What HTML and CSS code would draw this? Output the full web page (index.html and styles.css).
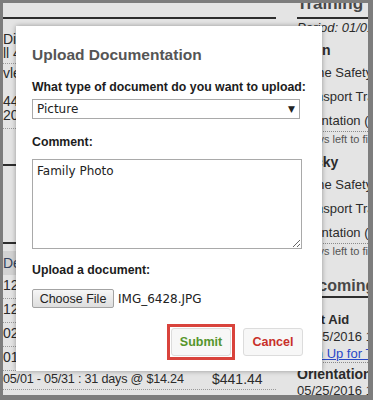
FILE: index.html
```html
<!DOCTYPE html>
<html lang="en">
<head>
    <meta charset="UTF-8">
    <meta name="viewport" content="width=device-width, initial-scale=1.0">
    <title>Upload Documentation</title>
    <link rel="stylesheet" href="styles.css">
</head>
<body>
<div class="screen">
    <div class="page">
        <!-- Main column (behind the dialog) -->
        <div class="main">
            <div class="main-head"></div>
            <div class="info-block">
                <div class="info-line">Direct Deposit</div>
                <div class="info-line">ll 4 accounts</div>
                <div class="info-line spaced">vle Road</div>
                <div class="info-line gap">4410 Main</div>
                <div class="info-line">2016</div>
            </div>
            <div class="section-head"></div>
            <div class="section-head tall"></div>
            <div class="table">
                <div class="table-head">Description</div>
                <div class="table-row"><span>12/01 - 12/31</span></div>
                <div class="table-row"><span>12/01 - 12/31</span></div>
                <div class="table-row"><span>02/01 - 02/29</span></div>
                <div class="table-row"><span>01/01 - 01/31</span></div>
                <div class="table-row last">
                    <span class="desc">05/01 - 05/31 : 31 days @ $14.24</span>
                    <span class="amount">$441.44</span>
                </div>
            </div>
        </div>

        <!-- Sidebar -->
        <aside class="side">
            <h2 class="side-title">Training</h2>
            <div class="period">Period: 01/01/2016 - 12/31/2016</div>
            <div class="person">John</div>
            <div class="course">Home Safety</div>
            <div class="course">Transport Training</div>
            <div class="course">Orientation (2)</div>
            <div class="days-left">2 days left to finish</div>
            <div class="person second">Becky</div>
            <div class="course">Home Safety</div>
            <div class="course">Transport Training</div>
            <div class="course">Orientation (2)</div>
            <div class="days-left">2 days left to finish</div>

            <h2 class="side-title upcoming">Upcoming</h2>
            <div class="event-name">First Aid</div>
            <div class="event-date">05/25/2016 12:00 PM</div>
            <a class="event-link" href="#">Sign Up for Training</a>
            <div class="event-name next">Orientation</div>
            <div class="event-date">05/25/2016 12:00 PM</div>
        </aside>
    </div>

    <!-- Upload dialog -->
    <div class="modal">
        <h1>Upload Documentation</h1>

        <label class="field-label">What type of document do you want to upload:</label>
        <div class="select-box">
            <span>Picture</span>
            <span class="select-arrow">&#9660;</span>
        </div>

        <label class="field-label comment-label" for="comment">Comment:</label>
        <textarea id="comment" class="comment">Family Photo</textarea>

        <label class="field-label upload-label">Upload a document:</label>
        <div class="file-row">
            <button class="file-button" type="button">Choose File</button>
            <span class="file-name">IMG_6428.JPG</span>
        </div>

        <div class="actions">
            <span class="highlight">
                <button class="action submit" type="button">Submit</button>
            </span>
            <button class="action cancel" type="button">Cancel</button>
        </div>
    </div>
</div>
</body>
</html>
```

FILE: styles.css
```css
* {
    box-sizing: border-box;
}

body {
    margin: 0;
    font-family: 'Liberation Sans', Arial, sans-serif;
    background: #7d7d7d;
}

.screen {
    position: relative;
    width: 373px;
    height: 400px;
    overflow: hidden;
    border-style: solid;
    border-color: #7d7d7d;
    border-width: 3px 5px 5px 3px;
    background: #e4e4e4;
    color: #2b2b2b;
}

.page {
    display: grid;
    grid-template-columns: 273px 71px;
    column-gap: 21px;
}

/* ---------- main column ---------- */

.main-head {
    height: 16px;
    border-bottom: 2px solid #2e2e2e;
}

.info-block {
    padding: 13px 0 6px;
    border-bottom: 1px dotted #9a9a9a;
    font-size: 14px;
}

.info-line {
    line-height: 14px;
    white-space: nowrap;
}

.info-line.spaced {
    margin-top: 3px;
    padding-top: 2px;
    border-top: 1px dotted #9a9a9a;
}

.info-line.gap {
    margin-top: 14px;
}

.section-head {
    height: 37px;
    border-bottom: 2px solid #2e2e2e;
}

.section-head.tall {
    height: 78px;
}

.table {
    margin-top: 7px;
    font-size: 14px;
}

.table-head {
    height: 24px;
    line-height: 24px;
    background: #d2d2d2;
    color: #34425e;
}

.table-row {
    display: flex;
    height: 24px;
    line-height: 20px;
    border-bottom: 1px dotted #9a9a9a;
    white-space: nowrap;
}

.table-row.last {
    height: 19px;
    line-height: 17px;
}

.desc {
    width: 209px;
    font-size: 12.6px;
    letter-spacing: -0.2px;
}

.amount {
    width: 50px;
    text-align: right;
}

/* ---------- sidebar ---------- */

.side {
    font-size: 13px;
    white-space: nowrap;
}

.side-title {
    margin: 0;
    height: 16px;
    line-height: 2px;
    font-size: 17px;
    color: #474747;
    border-bottom: 2px solid #2e2e2e;
}

.period {
    line-height: 18px;
    font-style: italic;
}

.person {
    margin-top: 4px;
    line-height: 18px;
    font-size: 14px;
    font-weight: bold;
}

.person.second {
    margin-top: 7px;
}

.course {
    margin-top: 4px;
    line-height: 20px;
}

.days-left {
    border-top: 1px dotted #8a8a8a;
    line-height: 14px;
    font-size: 11px;
    color: #555;
}

.side-title.upcoming {
    margin-top: 18px;
    height: 22px;
    line-height: 20px;
    font-size: 16px;
}

.event-name {
    margin-top: 13px;
    line-height: 18px;
    font-weight: bold;
}

.event-name.next {
    margin-top: 0;
    padding-top: 2px;
    border-top: 1px dotted #8a8a8a;
    font-size: 14px;
}

.event-date {
    line-height: 16px;
}

.event-link {
    display: block;
    line-height: 17px;
    color: #2847c8;
}

/* ---------- dialog ---------- */

.modal {
    position: absolute;
    left: 13px;
    top: 23px;
    width: 306px;
    height: 345px;
    padding: 19px 19px 0 16px;
    background: #fff;
    box-shadow: 0 0 5px rgba(0, 0, 0, 0.35);
}

.modal h1 {
    margin: 0;
    font-size: 15.5px;
    line-height: 20px;
    color: #555;
}

.field-label {
    display: block;
    margin-top: 14px;
    font-size: 12.3px;
    font-weight: bold;
    line-height: 16px;
    color: #1c1c1c;
    white-space: nowrap;
}

.select-box {
    display: flex;
    align-items: center;
    justify-content: space-between;
    width: 268px;
    height: 20px;
    margin-top: 4px;
    padding: 0 4px 0 4px;
    border: 1px solid #a9a9a9;
    font-family: 'DejaVu Sans', Verdana, sans-serif;
    font-size: 12px;
    color: #222;
}

.select-arrow {
    font-size: 9px;
}

.comment-label {
    margin-top: 15px;
}

.comment {
    display: block;
    width: 270px;
    height: 90px;
    margin: 9px 0 0;
    padding: 4px 4px;
    border: 1px solid #a9a9a9;
    font-family: 'DejaVu Sans', Verdana, sans-serif;
    font-size: 12px;
    color: #222;
}

.upload-label {
    margin-top: 13px;
}

.file-row {
    display: flex;
    align-items: center;
    margin-top: 11px;
}

.file-button {
    width: 82px;
    height: 19px;
    padding: 0;
    border: 1px solid #a3a3a3;
    border-radius: 2px;
    background: linear-gradient(#f6f6f6, #dedede);
    font-family: 'Liberation Sans', Arial, sans-serif;
    font-size: 12.5px;
    color: #222;
}

.file-name {
    margin-left: 4px;
    font-family: 'DejaVu Sans', Verdana, sans-serif;
    font-size: 12px;
    color: #222;
}

.actions {
    display: flex;
    justify-content: flex-end;
    align-items: center;
    gap: 8px;
    margin-top: 16px;
}

.highlight {
    display: flex;
    padding: 1px;
    border: 3px solid #d9433c;
}

.action {
    width: 60px;
    height: 28px;
    padding: 0;
    border: 1px solid #dcdcdc;
    border-radius: 3px;
    background: #f7f7f7;
    font-family: 'Liberation Sans', Arial, sans-serif;
    font-size: 12.5px;
    font-weight: bold;
}

.submit {
    color: #55952c;
}

.cancel {
    color: #c8302a;
}
```
